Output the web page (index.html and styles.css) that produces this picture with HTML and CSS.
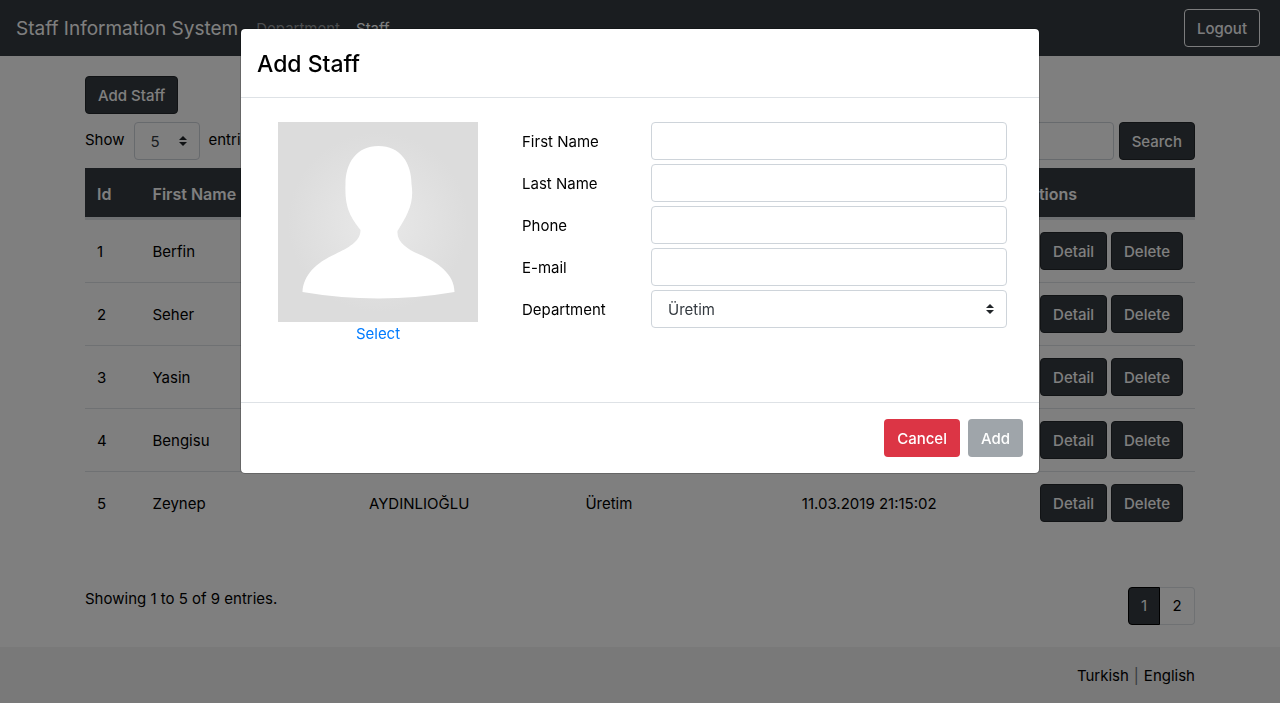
FILE: index.html
```html
<!DOCTYPE html>
<html lang="en">
<head>
<meta charset="utf-8">
<meta name="viewport" content="width=device-width, initial-scale=1">
<title>Staff Information System</title>
<link rel="stylesheet" href="styles.css">
</head>
<body>
<div class="page">
  <header class="navbar">
    <a class="brand" href="#">Staff Information System</a>
    <nav class="nav">
      <a class="nav-link" href="#">Department</a>
      <a class="nav-link active" href="#">Staff</a>
    </nav>
    <button class="btn btn-outline" type="button">Logout</button>
  </header>

  <main class="container content">
    <button class="btn btn-dark" type="button">Add Staff</button>
    <div class="toolbar">
      <label class="toolbar-text" for="page-size">Show</label>
      <div class="select-wrap page-size">
        <select class="control select" id="page-size"><option>5</option></select>
        <svg class="caret" viewBox="0 0 8 10" aria-hidden="true"><path d="M4 0 0 4h8zM4 10 0 6h8z"/></svg>
      </div>
      <span class="toolbar-text">entries</span>
      <form class="search">
        <input class="control" type="text" aria-label="Search">
        <button class="btn btn-dark" type="button">Search</button>
      </form>
    </div>
    <table class="table">
      <colgroup><col class="col-id"><col class="col-text"><col class="col-text"><col class="col-text"><col class="col-text"><col></colgroup>
      <thead>
        <tr><th>Id</th><th>First Name</th><th>Last Name</th><th>Department</th><th>Date</th><th>Actions</th></tr>
      </thead>
      <tbody>
        <tr><td>1</td><td>Berfin</td><td></td><td></td><td></td><td class="actions"><button class="btn btn-dark" type="button">Detail</button><button class="btn btn-dark" type="button">Delete</button></td></tr>
        <tr><td>2</td><td>Seher</td><td></td><td></td><td></td><td class="actions"><button class="btn btn-dark" type="button">Detail</button><button class="btn btn-dark" type="button">Delete</button></td></tr>
        <tr><td>3</td><td>Yasin</td><td></td><td></td><td></td><td class="actions"><button class="btn btn-dark" type="button">Detail</button><button class="btn btn-dark" type="button">Delete</button></td></tr>
        <tr><td>4</td><td>Bengisu</td><td></td><td></td><td></td><td class="actions"><button class="btn btn-dark" type="button">Detail</button><button class="btn btn-dark" type="button">Delete</button></td></tr>
        <tr><td>5</td><td>Zeynep</td><td>AYDINLIOĞLU</td><td>Üretim</td><td>11.03.2019 21:15:02</td><td class="actions"><button class="btn btn-dark" type="button">Detail</button><button class="btn btn-dark" type="button">Delete</button></td></tr>
      </tbody>
    </table>
    <div class="table-footer">
      <span>Showing 1 to 5 of 9 entries.</span>
      <nav class="pagination" aria-label="Pages">
        <a class="page-link current" href="#">1</a>
        <a class="page-link" href="#">2</a>
      </nav>
    </div>
  </main>

  <footer class="footer">
    <div class="container languages"><a href="#">Turkish</a><span class="divider">|</span><a href="#">English</a></div>
  </footer>
</div>

<div class="backdrop">
  <form class="modal" role="dialog" aria-modal="true" aria-labelledby="modal-title">
    <div class="modal-header"><h1 class="modal-title" id="modal-title">Add Staff</h1></div>
    <div class="modal-body">
      <div class="photo">
        <svg class="avatar" viewBox="0 0 200 200" role="img" aria-label="Staff photo">
          <defs>
            <radialGradient id="glow" cx="50%" cy="50%" r="45%">
              <stop offset="0" stop-color="#e9e9e9"/>
              <stop offset="1" stop-color="#dcdcdc"/>
            </radialGradient>
          </defs>
          <rect width="200" height="200" fill="url(#glow)"/>
          <path fill="#fff" d="M100.500 24c22 0 33 17 33 38 3 19-4 31-14 47-1 11 10 18 21 23 19 8 36 20 36 38q-76 13-152 0c1-17 13-29 33-38 12-6 25-12 25-24-10-13-16-22-15-46 0-21 11-38 33-38z"/>
        </svg>
        <a class="link" href="#">Select</a>
      </div>
      <div class="fields">
        <label for="first-name">First Name</label><input class="control" id="first-name" type="text">
        <label for="last-name">Last Name</label><input class="control" id="last-name" type="text">
        <label for="phone">Phone</label><input class="control" id="phone" type="tel">
        <label for="email">E-mail</label><input class="control" id="email" type="email">
        <label for="department">Department</label>
        <div class="select-wrap">
          <select class="control select" id="department"><option>Üretim</option></select>
          <svg class="caret" viewBox="0 0 8 10" aria-hidden="true"><path d="M4 0 0 4h8zM4 10 0 6h8z"/></svg>
        </div>
      </div>
    </div>
    <div class="modal-footer">
      <button class="btn btn-danger" type="button">Cancel</button>
      <button class="btn btn-secondary" type="button" disabled>Add</button>
    </div>
  </form>
</div>
</body>
</html>
```

FILE: styles.css
```css
* { box-sizing: border-box; }

body {
  margin: 0;
  background: #fff;
  color: #000;
  font: 15px/24px Inter, "Liberation Sans", sans-serif;
}

a { color: inherit; text-decoration: none; }

.page {
  display: flex;
  flex-direction: column;
  min-height: 100vh;
}

.container {
  width: 100%;
  max-width: 1140px;
  margin: 0 auto;
  padding: 0 15px;
}

.btn {
  height: 38px;
  padding: 2px 12px 0;
  border: 1px solid transparent;
  border-radius: 4px;
  color: #fff;
  font: inherit;
  font-weight: 500;
  white-space: nowrap;
}

.btn-dark { background: #343a40; border-color: #23272b; }
.btn-outline { background: transparent; border-color: #f8f9fa; color: #f8f9fa; }
.btn-danger { background: #dc3545; }
.btn-secondary { background: #9fa5aa; }

.control {
  width: 100%;
  height: 38px;
  padding: 0 12px;
  border: 1px solid #ced4da;
  border-radius: 4px;
  background: transparent;
  color: #343a40;
  font: inherit;
}

.select-wrap { position: relative; }
.select { display: block; padding: 2px 16px 0; appearance: none; }

.caret {
  position: absolute;
  top: 14px;
  right: 13px;
  width: 8px;
  height: 10px;
  fill: #212529;
  pointer-events: none;
}

.navbar {
  display: flex;
  align-items: center;
  height: 56px;
  padding: 0 20px 0 16px;
  background: #343a40;
}

.brand {
  margin-right: 18px;
  padding-top: 2px;
  color: #fff;
  font-size: 19px;
}

.nav { display: flex; flex: 1; gap: 16px; padding-top: 2px; }
.nav-link { color: #999c9f; }
.nav-link.active { color: #fff; }

.content { flex: 1; padding-top: 20px; }

.toolbar {
  display: flex;
  align-items: flex-start;
  margin: 8px 0;
}

.toolbar-text { line-height: 36px; }
.page-size { width: 66px; margin: 0 9px; }

.search {
  display: flex;
  gap: 5px;
  width: 320px;
  margin-left: auto;
}

.table {
  width: 100%;
  table-layout: fixed;
  border-collapse: separate;
  border-spacing: 0;
}

.col-id { width: 5%; }
.col-text { width: 19.5%; }

.table th {
  height: 51px;
  padding: 2px 12px 0;
  border-bottom: 2px solid #dee2e6;
  background: #343a40;
  background-clip: padding-box;
  color: #fff;
  font-size: 16px;
  font-weight: 600;
  text-align: left;
}

.table td {
  padding: 14px 12px 12px;
  border-top: 1px solid #dee2e6;
}

.table .actions {
  padding: 12px 12px 12px 0;
  text-align: right;
  white-space: nowrap;
}

.actions .btn + .btn { margin-left: 4px; }

.table-footer {
  display: flex;
  justify-content: space-between;
  margin: 53px 0 22px;
}

.pagination { display: flex; }

.page-link {
  padding: 6px 12px;
  border: 1px solid #dee2e6;
  border-left: 0;
  border-radius: 0 4px 4px 0;
  min-width: 35px;
  text-align: center;
}

.page-link.current {
  min-width: 32px;
  border: 1px solid #000;
  border-radius: 4px 0 0 4px;
  background: #343a40;
  color: #fff;
}

.footer { padding: 17px 0 15px; background: #f2f2f2; }

.languages {
  display: flex;
  justify-content: flex-end;
  gap: 5px;
}

.divider { color: #6c757d; }

.backdrop {
  position: fixed;
  inset: 0;
  padding: 28px 16px;
  overflow: auto;
  background: rgba(0, 0, 0, 0.5);
}

.modal {
  max-width: 800px;
  margin: 0 auto;
  border: 1px solid rgba(0, 0, 0, 0.2);
  border-radius: 5px;
  background: #fff;
  background-clip: padding-box;
}

.modal-header { padding: 17px 16px 15px; border-bottom: 1px solid #dee2e6; }

.modal-title {
  margin: 0;
  font-size: 23px;
  font-weight: 500;
  line-height: 36px;
}

.modal-body {
  display: flex;
  gap: 44px;
  padding: 24px 32px 56px 37px;
}

.photo { flex: none; width: 200px; text-align: center; }
.avatar { display: block; width: 200px; height: 200px; }
.link { color: #007bff; }

.fields {
  display: grid;
  flex: 1;
  grid-template-columns: 125px 1fr;
  align-content: start;
  align-items: center;
  gap: 4px;
}

.fields label { padding-top: 2px; }

.modal-footer {
  display: flex;
  justify-content: flex-end;
  gap: 8px;
  padding: 16px;
  border-top: 1px solid #dee2e6;
}
```
